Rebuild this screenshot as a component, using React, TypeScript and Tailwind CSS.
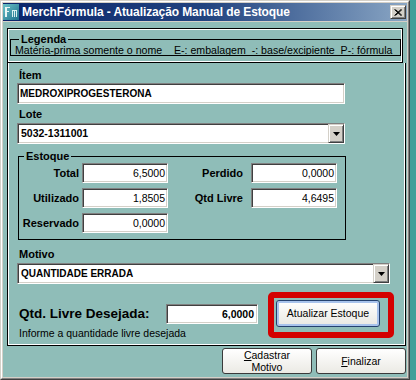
import React from "react";

const sunken =
  "border border-t-[#808080] border-l-[#808080] border-r-white border-b-white shadow-[inset_1px_1px_0_#404040,inset_-1px_-1px_0_#d4d0c8] bg-white";
const raised =
  "border border-t-[#d4d0c8] border-l-[#d4d0c8] border-r-[#404040] border-b-[#404040] shadow-[inset_1px_1px_0_#fff,inset_-1px_-1px_0_#808080] bg-[#d4d0c8]";

function Icon() {
  return (
    <svg width="16" height="16" viewBox="0 0 16 16" className="shrink-0">
      <defs>
        <linearGradient id="ig" x1="0" y1="0" x2="1" y2="1">
          <stop offset="0" stopColor="#6cc3c8" />
          <stop offset="1" stopColor="#1c6f8c" />
        </linearGradient>
      </defs>
      <rect x="0" y="0" width="16" height="16" fill="url(#ig)" />
      <rect x="2" y="3" width="2" height="10" fill="#e8f6f6" />
      <rect x="4" y="3" width="3" height="1" fill="#e8f6f6" />
      <rect x="4" y="7" width="2" height="1" fill="#e8f6f6" />
      <rect x="9" y="6" width="1" height="7" fill="#d8f0f0" />
      <rect x="11" y="6" width="1" height="7" fill="#d8f0f0" />
      <rect x="13" y="6" width="1" height="7" fill="#d8f0f0" />
      <rect x="9" y="6" width="5" height="1" fill="#d8f0f0" />
    </svg>
  );
}

function Triangle() {
  return (
    <svg width="7" height="4" viewBox="0 0 7 4">
      <polygon points="0,0 7,0 3.5,4" fill="#000" />
    </svg>
  );
}

function Select({ value, width }: { value: string; width: string }) {
  return (
    <div className={`${sunken} ${width} h-[21px] flex items-center`}>
      <span className="flex-1 pl-[3px] text-[10.5px] font-bold leading-[13px] whitespace-nowrap">{value}</span>
      <div className={`${raised} w-[16px] h-full flex items-center justify-center`}>
        <Triangle />
      </div>
    </div>
  );
}

function NumField({ value }: { value: string }) {
  return (
    <div className={`${sunken} w-[86px] h-[20px] flex items-center justify-end pr-[2px] text-[10.5px] leading-[13px]`}>
      {value}
    </div>
  );
}

function Row({ l1, v1, l2, v2 }: { l1: string; v1: string; l2?: string; v2?: string }) {
  return (
    <div className="flex items-center h-[20px]">
      <span className="w-[60px] text-right font-bold text-[11px] leading-[13px] whitespace-nowrap">{l1}</span>
      <div className="ml-[3px]">
        <NumField value={v1} />
      </div>
      {l2 && (
        <>
          <span className="w-[75px] text-right font-bold text-[11px] leading-[13px] whitespace-nowrap">{l2}</span>
          <div className="ml-[8px]">
            <NumField value={v2 ?? ""} />
          </div>
        </>
      )}
    </div>
  );
}

export default function App() {
  return (
    <div className="w-[416px] h-[380px] bg-[#3f9f9a] flex overflow-hidden font-['Liberation_Sans',Arial,sans-serif] text-black">
      <div className="w-[410px] h-[380px] border border-t-[#d4d0c8] border-l-[#d4d0c8] border-r-[#404040] border-b-[#404040]">
        <div className="h-full border border-t-white border-l-white border-r-[#808080] border-b-[#808080] bg-[#d4d0c8] p-px flex flex-col">
          {/* Title bar */}
          <div className="h-[18px] shrink-0 flex items-center bg-gradient-to-r from-[#0a246a] via-[#22437f] to-[#8aa6c4]">
            <Icon />
            <span className="ml-[3px] text-white font-bold text-[12px] leading-[14px] tracking-[-0.1px] whitespace-nowrap">
              MerchFórmula - Atualização Manual de Estoque
            </span>
            <div className={`${raised} ml-auto mr-px w-[16px] h-[14px] flex items-center justify-center`}>
              <svg width="8" height="7" viewBox="0 0 8 7">
                <path d="M0.5 0.5 L7 6.5 M1.5 0.5 L8 6.5 M7 0.5 L0.5 6.5 M8 0.5 L1.5 6.5" stroke="#000" strokeWidth="1" />
              </svg>
            </div>
          </div>

          {/* Client area */}
          <div className="mt-px flex-1 bg-[#8fbdb8] flex flex-col">
            {/* Legenda panel */}
            <div className="mt-[6px] ml-[4px] w-[396px] h-[35px] border border-black shadow-[inset_0_0_0_1px_#fff]">
              <fieldset className="mt-[5px] ml-[2px] w-[391px] border border-black min-w-0 pl-[4px]">
                <legend className="ml-[4px] px-[2px] font-bold text-[11px] leading-[11px]">Legenda</legend>
                <div className="text-[10.6px] leading-[10px] whitespace-pre">
                  {"Matéria-prima somente o nome    E-: embalagem  -: base/excipiente  P-: fórmula"}
                </div>
              </fieldset>
            </div>

            {/* Main panel */}
            <div className="ml-[4px] w-[399px] h-[283px] border border-t-0 border-black shadow-[inset_1px_0_0_#fff,inset_-1px_-1px_0_#fff] pl-[9px] flex flex-col">
              <span className="mt-[6px] ml-[2px] font-bold text-[11px] leading-[13px]">Ítem</span>
              <div className={`${sunken} mt-px w-[328px] h-[21px] flex items-center pl-[2px] font-bold text-[10px] leading-[13px]`}>
                MEDROXIPROGESTERONA
              </div>
              <span className="mt-[4px] ml-[2px] font-bold text-[11px] leading-[13px]">Lote</span>
              <div className="mt-[2px]">
                <Select value="5032-1311001" width="w-[328px]" />
              </div>

              <fieldset className="mt-[6px] ml-px w-[328px] border border-black min-w-0 pb-[6px]">
                <legend className="ml-[5px] px-[2px] font-bold text-[11px] leading-[13px]">Estoque</legend>
                <div className="flex flex-col gap-[5px]">
                  <Row l1="Total" v1="6,5000" l2="Perdido" v2="0,0000" />
                  <Row l1="Utilizado" v1="1,8505" l2="Qtd Livre" v2="4,6495" />
                  <Row l1="Reservado" v1="0,0000" />
                </div>
              </fieldset>

              <span className="mt-[8px] ml-[2px] font-bold text-[11px] leading-[13px]">Motivo</span>
              <div className="mt-[2px]">
                <div className={`${sunken} w-[373px] h-[21px] flex items-center`}>
                  <span className="flex-1 pl-[3px] text-[10px] font-bold leading-[13px] whitespace-nowrap">QUANTIDADE ERRADA</span>
                  <div className={`${raised} w-[16px] h-full flex items-center justify-center`}>
                    <Triangle />
                  </div>
                </div>
              </div>

              <div className="mt-[8px] flex items-start">
                <div className="w-[241px] pt-[12px] flex flex-col">
                  <div className="flex items-center h-[20px]">
                    <span className="w-[149px] pl-[2px] font-bold text-[13.5px] leading-[16px] whitespace-nowrap">
                      Qtd. Livre Desejada:
                    </span>
                    <div className={`${sunken} w-[92px] h-[20px] flex items-center justify-end pr-[3px] font-bold text-[10.5px] leading-[13px]`}>
                      6,0000
                    </div>
                  </div>
                  <span className="mt-[3px] pl-[2px] text-[10.5px] leading-[13px] whitespace-nowrap">
                    Informe a quantidade livre desejada
                  </span>
                </div>
                <div className="ml-[10px] border-[6px] border-[#d40000] rounded-[5px] pl-[2px] pt-[2px] pr-[8px] pb-[5px]">
                  <div className="w-[104px] h-[27px] rounded-[3px] border border-[#24416f] bg-gradient-to-b from-white to-[#e9e8e2] shadow-[inset_0_0_0_2px_#a8c3ec] flex items-center justify-center text-[10.5px] leading-[13px] whitespace-nowrap">
                    Atualizar Estoque
                  </div>
                </div>
              </div>
            </div>

            {/* Bottom buttons */}
            <div className="mt-[2px] mr-px flex justify-end gap-[4px]">
              <div className="w-[90px] h-[26px] rounded-[3px] border border-[#3a3a3a] bg-gradient-to-b from-white to-[#ebeae4] flex flex-col items-center justify-center text-[10.5px] leading-[12px]">
                <span><span className="underline">C</span>adastrar</span>
                <span>Motivo</span>
              </div>
              <div className="w-[90px] h-[26px] rounded-[3px] border border-[#3a3a3a] bg-gradient-to-b from-white to-[#ebeae4] flex items-center justify-center text-[10.5px] leading-[12px]">
                <span><span className="underline">F</span>inalizar</span>
              </div>
            </div>
          </div>
        </div>
      </div>
    </div>
  );
}
